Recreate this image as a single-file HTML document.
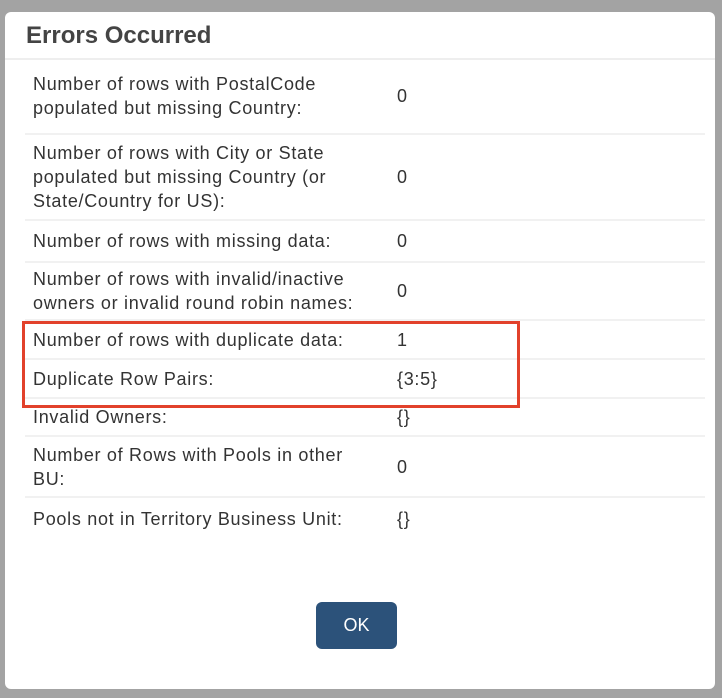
<!DOCTYPE html>
<html><head><meta charset="utf-8"><style>
body{margin:0;width:722px;height:698px;background:#a3a3a3;position:relative;overflow:hidden;font-family:"Liberation Sans",sans-serif;color:#333}
.m{position:absolute;left:5px;top:12px;width:710px;height:677px;background:#fff;border-radius:6px}
.h{position:absolute;left:21px;top:10px;font-size:24px;font-weight:bold;color:#444}
.hl{position:absolute;left:0;right:0;top:46px;height:2px;background:#eee}
.r{position:absolute;left:20px;width:680px;border-bottom:2px solid #f1f1f1;display:flex;align-items:center;font-size:18px;line-height:24px;letter-spacing:0.7px}
.r .k{width:336px;padding-left:8px}
.r .v{position:absolute;left:372px}
.box{position:absolute;left:22px;top:321px;width:492px;height:81px;border:3px solid #e2412b}
.ok{position:absolute;left:316px;top:602px;width:81px;height:47px;background:#2c527a;border-radius:6px;color:#fff;font-size:18px;text-align:center;line-height:47px}
</style></head><body>
<div class="m">
<div class="h">Errors Occurred</div>
<div class="hl"></div>
<div class="r" style="top:47px;height:74px"><div class="k">Number of rows with PostalCode<br>populated but missing Country:</div><div class="v">0</div></div>
<div class="r" style="top:123px;height:84px"><div class="k">Number of rows with City or State<br>populated but missing Country (or<br>State/Country for US):</div><div class="v">0</div></div>
<div class="r" style="top:209px;height:40px"><div class="k">Number of rows with missing data:</div><div class="v">0</div></div>
<div class="r" style="top:251px;height:56px"><div class="k">Number of rows with invalid/inactive<br>owners or invalid round robin names:</div><div class="v">0</div></div>
<div class="r" style="top:309px;height:37px"><div class="k">Number of rows with duplicate data:</div><div class="v">1</div></div>
<div class="r" style="top:348px;height:37px"><div class="k">Duplicate Row Pairs:</div><div class="v">{3:5}</div></div>
<div class="r" style="top:387px;height:36px"><div class="k">Invalid Owners:</div><div class="v">{}</div></div>
<div class="r" style="top:425px;height:59px"><div class="k">Number of Rows with Pools in other<br>BU:</div><div class="v">0</div></div>
<div class="r" style="top:486px;height:42px;border-bottom:none"><div class="k">Pools not in Territory Business Unit:</div><div class="v">{}</div></div>
</div>
<div class="box"></div>
<div class="ok">OK</div>
</body></html>
